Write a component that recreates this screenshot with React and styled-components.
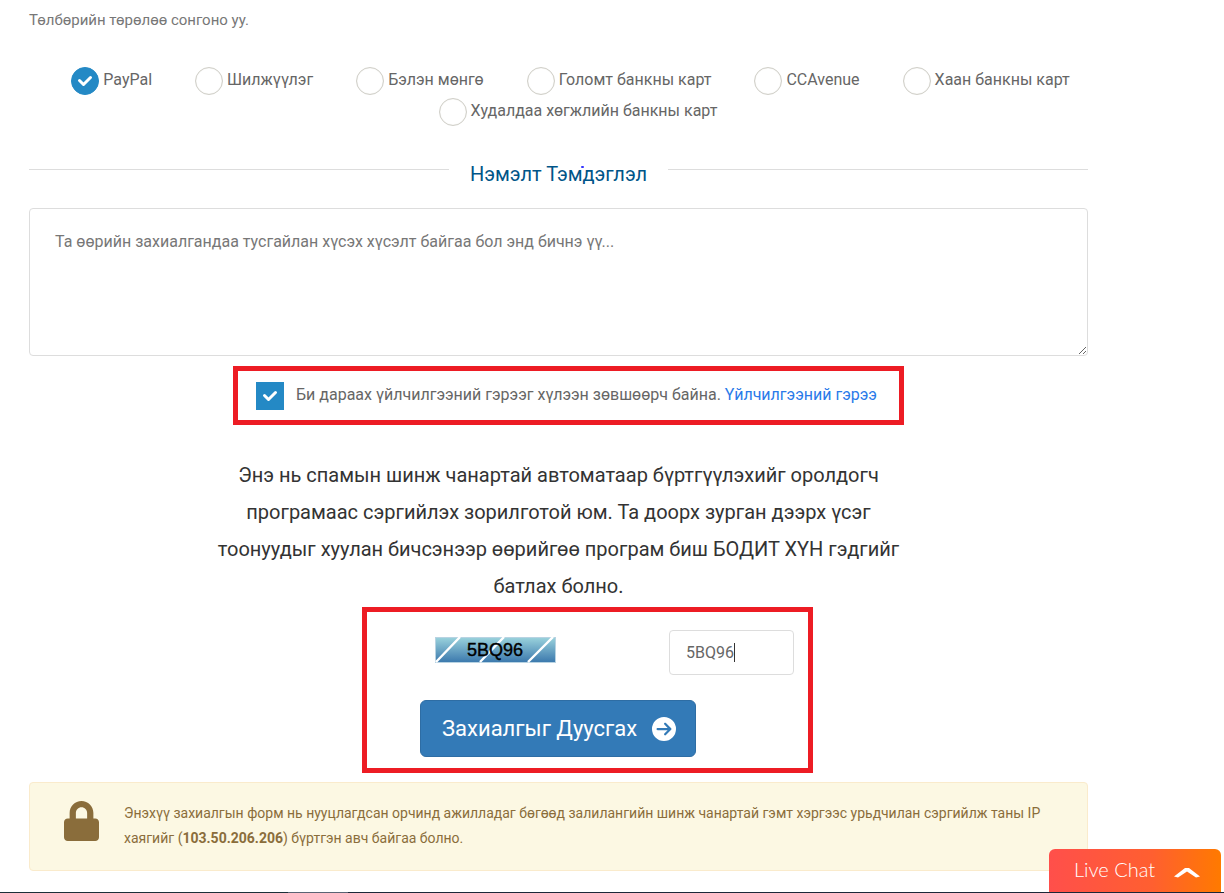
import React, { useState } from "react";
import styled, { createGlobalStyle } from "styled-components";
import { FaLock } from "react-icons/fa";
import { FaCircleArrowRight } from "react-icons/fa6";

const GlobalStyle = createGlobalStyle`
  * {
    box-sizing: border-box;
  }
  body {
    margin: 0;
    background-color: #fff;
    color: #666;
    font-family: Roboto, "Noto Sans", sans-serif;
    font-size: 16px;
  }
`;

const Container = styled.main`
  padding: 8px 136px 22px 29px;
`;

const Intro = styled.p`
  margin: 0 0 35px;
  font-size: 15px;
  line-height: 24px;
  color: #777;
`;

const Options = styled.div`
  display: flex;
  flex-wrap: wrap;
  justify-content: center;
  gap: 3px 4px;
`;

const Option = styled.label`
  display: flex;
  gap: 4px;
  padding-left: 39px;
  line-height: 26px;
  cursor: pointer;
  &:first-child {
    padding-left: 24px;
  }
`;

const Tick = styled.span`
  position: relative;
  display: flex;
  width: 28px;
  height: 28px;
  flex: none;
`;

const TickInput = styled.input`
  appearance: none;
  margin: 0;
  width: 28px;
  height: 28px;
  border: 1px solid #d0cfc8;
  border-radius: ${(props) => (props.type === "radio" ? "50%" : "0")};
  background-color: #fff;
  box-shadow: inset 0 0 1px #d0cfc8;
  cursor: pointer;
  &:checked {
    border-color: #2489c5;
    background-color: #2489c5;
    box-shadow: none;
  }
  &:checked + svg {
    display: block;
  }
`;

const TickMark = styled.svg`
  display: none;
  position: absolute;
  top: 0;
  left: 0;
  pointer-events: none;
`;

const Title = styled.h2`
  display: flex;
  align-items: center;
  gap: 21px;
  margin: 34px 0 20px;
  font-size: 20px;
  font-weight: 400;
  line-height: 28px;
  color: #058;
  &::before,
  &::after {
    content: "";
    flex: 1;
    height: 1px;
    margin-bottom: 9px;
    background-color: #ddd;
  }
`;

const TitleText = styled.span`
  position: relative;
  &::after {
    content: "";
    position: absolute;
    top: 6px;
    left: 111px;
    width: 3px;
    height: 2px;
    border-radius: 1px;
    background-color: #33f;
  }
`;

const Notes = styled.textarea`
  display: block;
  width: 100%;
  height: 148px;
  padding: 21px 25px;
  border: 1px solid #ddd;
  border-radius: 4px;
  color: #666;
  font: inherit;
  line-height: 24px;
  resize: vertical;
  &::placeholder {
    color: #777;
  }
`;

const Row = styled.div`
  display: flex;
  justify-content: center;
  padding-left: ${(props) => props.$indent}px;
`;

const Highlight = styled.div`
  border: 5px solid #ed1c24;
`;

const Agreement = styled(Highlight)`
  display: flex;
  margin: 10px 0 32px;
  padding: 11px 22px 10px 18px;
`;

const AgreementText = styled.p`
  margin: 0 0 0 12px;
  line-height: 26px;
`;

const Link = styled.a`
  color: #2a7ae9;
  text-decoration: none;
`;

const Explanation = styled.p`
  max-width: 706px;
  margin: 0 auto 2px;
  color: #333;
  font-size: 20px;
  line-height: 37px;
  text-align: center;
`;

const Verify = styled(Highlight)`
  width: 451px;
  padding: 18px 14px 11px 53px;
`;

const CaptchaRow = styled.div`
  display: flex;
  align-items: center;
  justify-content: space-between;
  margin-bottom: 25px;
  padding-left: 15px;
`;

const Captcha = styled.svg`
  display: block;
  margin-bottom: 5px;
`;

const CodeField = styled.div`
  position: relative;
`;

const CodeInput = styled.input`
  display: block;
  width: 125px;
  height: 45px;
  padding: 0 16px;
  border: 1px solid #ddd;
  border-radius: 4px;
  color: #666;
  font: inherit;
`;

const Caret = styled.span`
  position: absolute;
  top: 13px;
  left: 65px;
  width: 1px;
  height: 19px;
  background-color: #333;
`;

const Submit = styled.button`
  display: flex;
  align-items: center;
  justify-content: space-between;
  width: 276px;
  height: 57px;
  padding: 0 19px 0 21px;
  border: 1px solid #2e6da4;
  border-radius: 6px;
  background-color: #337ab7;
  color: #fff;
  font: inherit;
  font-size: 22px;
  cursor: pointer;
`;

const Notice = styled.div`
  display: flex;
  align-items: flex-start;
  gap: 25px;
  margin-top: 9px;
  padding: 18px 34px 19px;
  border: 1px solid #faebcc;
  border-radius: 4px;
  background-color: #fcf8e3;
  color: #8a6d3b;
  font-size: 14px;
  line-height: 25px;
`;

const LockIcon = styled(FaLock)`
  flex: none;
  width: 35px;
  height: 40px;
`;

const NoticeText = styled.p`
  margin: 0;
`;

const LiveChat = styled.button`
  position: fixed;
  right: 3px;
  bottom: 0;
  display: flex;
  align-items: center;
  justify-content: space-between;
  width: 172px;
  height: 44px;
  padding: 0 21px 4px 25px;
  border: 0;
  border-radius: 6px 6px 0 0;
  background: linear-gradient(90deg, #ff4f4b, #ff5f30 60%, #ff7a00);
  color: #fff;
  font-family: Lato, sans-serif;
  font-size: 20px;
  font-weight: 300;
  cursor: pointer;
  svg {
    margin-top: 6px;
  }
`;

const BottomEdge = styled.div`
  position: fixed;
  right: 0;
  bottom: 0;
  left: 0;
  height: 1px;
  background: linear-gradient(
    90deg,
    #1b2f38 288px,
    #5a6474 288px 348px,
    #1b2738 348px
  );
`;

const methods = [
  "PayPal",
  "Шилжүүлэг",
  "Бэлэн мөнгө",
  "Голомт банкны карт",
  "CCAvenue",
  "Хаан банкны карт",
  "Худалдаа хөгжлийн банкны карт",
];

const TickBox = (props) => (
  <Tick>
    <TickInput {...props} />
    <TickMark width="28" height="28" viewBox="0 0 28 28" aria-hidden="true">
      <path
        d="M8.5 13.5l4 4 7-7"
        fill="none"
        stroke="#fff"
        strokeWidth="3"
        strokeLinecap="round"
        strokeLinejoin="round"
      />
    </TickMark>
  </Tick>
);

const App = () => {
  const [method, setMethod] = useState("PayPal");
  const [code, setCode] = useState("5BQ96");

  return (
    <>
      <GlobalStyle />
      <Container>
        <Intro>Төлбөрийн төрөлөө сонгоно уу.</Intro>
        <Options>
          {methods.map((name) => (
            <Option key={name}>
              <TickBox
                type="radio"
                name="method"
                checked={method === name}
                onChange={() => setMethod(name)}
              />
              {name}
            </Option>
          ))}
        </Options>

        <Title>
          <TitleText>Нэмэлт Тэмдэглэл</TitleText>
        </Title>
        <Notes
          aria-label="Нэмэлт Тэмдэглэл"
          placeholder="Та өөрийн захиалгандаа тусгайлан хүсэх хүсэлт байгаа бол энд бичнэ үү..."
        />

        <Row $indent={20}>
          <Agreement>
            <TickBox type="checkbox" id="accept" defaultChecked />
            <AgreementText>
              <label htmlFor="accept">
                Би дараах үйлчилгээний гэрээг хүлээн зөвшөөрч байна.
              </label>{" "}
              <Link href="#terms">Үйлчилгээний гэрээ</Link>
            </AgreementText>
          </Agreement>
        </Row>

        <Explanation>
          Энэ нь спамын шинж чанартай автоматаар бүртгүүлэхийг оролдогч
          програмаас сэргийлэх зорилготой юм. Та доорх зурган дээрх үсэг
          тоонуудыг хуулан бичсэнээр өөрийгөө програм биш БОДИТ ХҮН гэдгийг
          батлах болно.
        </Explanation>

        <Row $indent={58}>
          <Verify>
            <CaptchaRow>
              <Captcha width="121" height="26" viewBox="0 0 121 26">
                <defs>
                  <linearGradient id="sky" x1="0" y1="0" x2="0" y2="1">
                    <stop offset="0" stopColor="#9ad2dc" />
                    <stop offset="1" stopColor="#3b78ad" />
                  </linearGradient>
                </defs>
                <rect
                  x="0.5"
                  y="0.5"
                  width="120"
                  height="25"
                  fill="url(#sky)"
                  stroke="#b8d3e2"
                />
                <path
                  d="M1 25L25 0M45 25L69 0M93 25L118 0"
                  stroke="#fff"
                  strokeWidth="2.4"
                />
                <text
                  x="32"
                  y="19"
                  fill="#000"
                  stroke="#000"
                  strokeWidth="0.4"
                  fontFamily="Liberation Sans, sans-serif"
                  fontSize="18"
                >
                  5BQ96
                </text>
              </Captcha>
              <CodeField>
                <CodeInput
                  aria-label="5BQ96"
                  value={code}
                  onChange={(e) => setCode(e.target.value)}
                />
                <Caret />
              </CodeField>
            </CaptchaRow>
            <Submit type="submit">
              Захиалгыг Дуусгах
              <FaCircleArrowRight size={24} />
            </Submit>
          </Verify>
        </Row>

        <Notice>
          <LockIcon />
          <NoticeText>
            Энэхүү захиалгын форм нь нууцлагдсан орчинд ажилладаг бөгөөд
            залилангийн шинж чанартай гэмт хэргээс урьдчилан сэргийлж таны IP
            хаягийг (<strong>103.50.206.206</strong>) бүртгэн авч байгаа болно.
          </NoticeText>
        </Notice>
      </Container>

      <LiveChat type="button">
        Live Chat
        <svg width="26" height="11" viewBox="0 0 26 11" aria-hidden="true">
          <path d="M0 9.5L11 1h4L26 9.5L22 10.5L13 4.5L4 10.5z" fill="#fff" />
        </svg>
      </LiveChat>
      <BottomEdge />
    </>
  );
};

export default App;
